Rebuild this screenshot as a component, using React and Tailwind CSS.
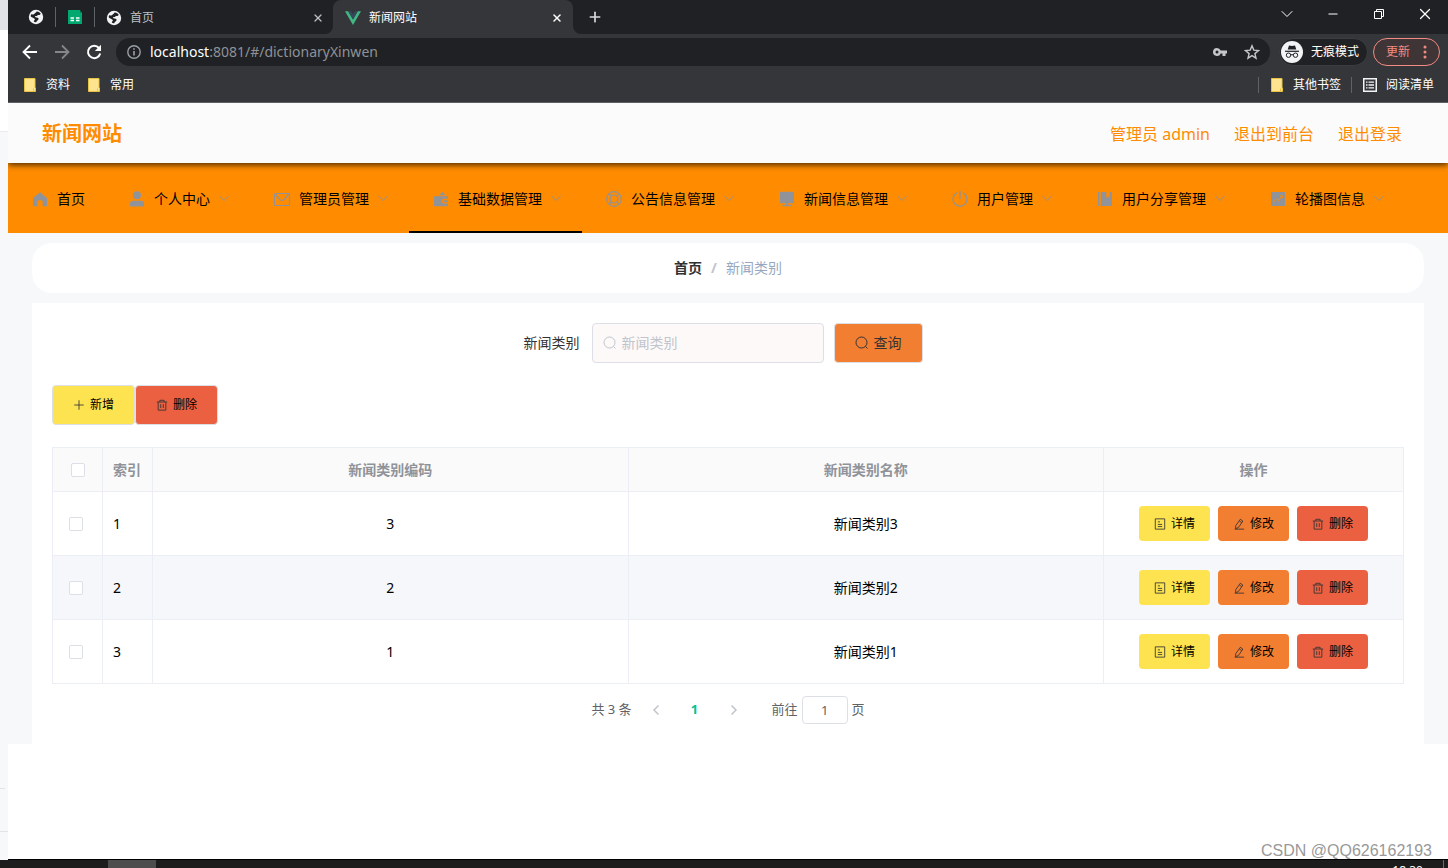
import { ChevronDown, Minus, Plus, X } from 'lucide-react';

const menus = [
  { label: '首页', icon: 'home', arrow: false },
  { label: '个人中心', icon: 'user', arrow: true },
  { label: '管理员管理', icon: 'mail', arrow: true },
  { label: '基础数据管理', icon: 'wallet', arrow: true, active: true },
  { label: '公告信息管理', icon: 'help', arrow: true },
  { label: '新闻信息管理', icon: 'monitor', arrow: true },
  { label: '用户管理', icon: 'power', arrow: true },
  { label: '用户分享管理', icon: 'notebook', arrow: true },
  { label: '轮播图信息', icon: 'chart', arrow: true },
];

const rows = [
  { id: 1, code: 3, name: '新闻类别3' },
  { id: 2, code: 2, name: '新闻类别2' },
  { id: 3, code: 1, name: '新闻类别1' },
];

// Drawn on an 18px grid, filled shapes use currentColor and cut-outs use evenodd
const menuIcons = {
  home: <path fill="currentColor" d="M9 2.3 16 8v8.2h-4.3v-4.4a1.5 1.5 0 0 0-1.5-1.5H7.8a1.5 1.5 0 0 0-1.5 1.5v4.4H2V8z" />,
  user: (
    <g fill="currentColor">
      <circle cx="9" cy="5.2" r="4" />
      <path d="M2 16.6v-2.8a3 3 0 0 1 3-3h8a3 3 0 0 1 3 3v2.8z" />
    </g>
  ),
  mail: (
    <g fill="none" stroke="currentColor" strokeWidth="1.2">
      <rect x="1.5" y="3.5" width="15" height="12" rx="1" />
      <path d="M2.5 4.5 7 9.6q2 1.6 4 0l4.5-5.1" />
    </g>
  ),
  wallet: (
    <g fill="currentColor">
      <path d="m6.5 5.2 4.500-3.400 2.200 3.400z" />
      <path d="M2 6.200h14v2.600h-3.800a2.400 2.400 0 0 0 0 4.800H16V16.200H2z" />
      <path d="M12.200 10.200h3.800v2h-3.800a1 1 0 0 1 0-2z" />
    </g>
  ),
  help: (
    <g fill="none" stroke="currentColor" strokeWidth="1.2">
      <circle cx="9" cy="9" r="7.3" />
      <circle cx="9" cy="9" r="4" />
      <path d="m4 3.700 2.500 2.600M14 3.700l-2.500 2.600M4 14.300l2.500-2.600M14 14.300l-2.500-2.600" />
    </g>
  ),
  monitor: <path fill="currentColor" d="M2 1.800h14v11.400H2zM8 13.200h2v1.600h3.500v1.400h-9v-1.400H8z" />,
  power: (
    <g fill="none" stroke="currentColor" strokeWidth="1.3" strokeLinecap="round">
      <path d="M5.800 3a7 7 0 1 0 6.400 0M9 1.500v7" />
    </g>
  ),
  notebook: (
    <path fill="currentColor" fillRule="evenodd" d="M2 2h1.500v14H2zM4.800 2H16v14H4.800zM10.300 2v6l1.700-1.600L13.700 8V2z" />
  ),
  chart: (
    <g>
      <rect x="2" y="2" width="14" height="14" fill="currentColor" />
      <path d="m4.500 12 3-3.200 2.200 1.700 3.500-4.700M10.800 5.800h2.500v2.400" fill="none" stroke="#ff8c00" />
    </g>
  ),
};

const smallIcons = {
  search: (
    <>
      <circle cx="6.5" cy="6.5" r="5.5" />
      <path d="m10.500 10.500 2 2" />
    </>
  ),
  plus: <path d="M7 1.500v11M1.500 7h11" />,
  trash: <path d="M1 3.500h12M4.500 3.500v-2h5v2M2.500 3.500v9.500h9V3.500M5.500 6v4.500M8.500 6v4.500" />,
  detail: <path d="M1.500 1h11v12h-11zM4.500 4.500h2.500M4.500 7.500h5M4.500 10h5" />,
  edit: <path d="M8.500 1.500 11.500 3.500 6.500 11 3 12.500 3.200 9zM7.500 3.500l3 2M2 13h11" />,
};

function SmallIcon({ name, className }) {
  return (
    <svg viewBox="0 0 14 14" fill="none" stroke="currentColor" aria-hidden="true" className={className}>
      {smallIcons[name]}
    </svg>
  );
}

function Globe() {
  return (
    <svg viewBox="0 0 16 16" className="size-4 shrink-0" aria-hidden="true">
      <circle cx="8" cy="8" r="7.2" fill="#f1f3f4" />
      <path
        d="M8.500 2.600c1.600-.3 3.600.8 4.300 2.400-.8.500-1.300 1.300-2.600 1-1 0-.8 1.200-2 1.100-1.300-.2-1.700.9-.6 1.200 1.200.4 2.800.2 3 1.500 0 1.500-2 1.700-2.300 3.400-1.300.2-2-.2-2.500-.8.3-1.200 1.300-1 1-2.300C6.200 8.900 4 8.800 2.600 7.200c.1-1 .4-1.700 1-2.300 1.300.9 2.200.6 2.900-.2.700-.8 1.800-1 2-2.100z"
        fill="#202124"
      />
    </svg>
  );
}

function Folder() {
  return (
    <svg viewBox="0 0 12 14" className="h-3.5 w-3 shrink-0" aria-hidden="true">
      <path d="M.5.5h10.500v9.500h.5v3.500H.5z" fill="#ffe48f" stroke="#e8c341" />
      <path d="M9.500 10.500v3" stroke="#e8c341" />
    </svg>
  );
}

function TabStrip() {
  return (
    <div className="flex h-[34px] items-center bg-[#202124] pl-5">
      <Globe />
      <span className="mx-[11px] h-5 w-px bg-[#5f6368]"></span>
      <svg viewBox="0 0 16 16" className="size-4 shrink-0" aria-hidden="true">
        <path d="M1 1h12v2h2v12H1z" fill="#00a870" />
        <path d="M13 1v3h2z" fill="#007a50" />
        <path d="M3.500 9h3.500M9 9h3.500M3.500 11.500h3.500M9 11.500h3.500" stroke="#fff" strokeWidth="1.3" />
      </svg>
      <span className="ml-[11px] h-5 w-px bg-[#5f6368]"></span>
      <div className="flex w-[238px] items-center gap-2 pt-px pl-[11px] pr-[7px] text-xs text-[#bdc1c6]">
        <Globe />
        <span className="flex-1">首页</span>
        <button aria-label="关闭" className="grid size-4 place-items-center">
          <X className="size-3" strokeWidth={2.5} />
        </button>
      </div>
      <div className="relative flex h-full w-60 items-center gap-2 rounded-t-lg bg-[#35363a] pt-px pl-3 pr-2 text-xs text-white">
        {/* curved feet of the active tab */}
        <svg viewBox="0 0 8 8" className="absolute bottom-0 -left-2 size-2" aria-hidden="true">
          <path d="M8 0v8H0a8 8 0 0 0 8-8z" fill="#35363a" />
        </svg>
        <svg viewBox="0 0 8 8" className="absolute bottom-0 -right-2 size-2" aria-hidden="true">
          <path d="M0 0v8h8a8 8 0 0 1-8-8z" fill="#35363a" />
        </svg>
        <svg viewBox="0 0 16 16" className="size-4 shrink-0" aria-hidden="true">
          <path d="M0 1.200h3.200L8 9.400l4.800-8.200H16L8 15z" fill="#41b883" />
          <path d="M3.200 1.200h3L8 4.300l1.800-3.100h3L8 9.400z" fill="#35495e" />
        </svg>
        <span className="flex-1">新闻网站</span>
        <button aria-label="关闭" className="grid size-4 place-items-center">
          <X className="size-3" strokeWidth={3} />
        </button>
      </div>
      <button aria-label="新标签页" className="ml-2 grid size-7 place-items-center text-[#dadce0]">
        <Plus className="size-4" strokeWidth={2.5} />
      </button>
      <div className="ml-auto flex h-7 self-start text-white">
        <button aria-label="搜索标签页" className="grid w-[46px] place-items-center">
          <ChevronDown className="size-5" strokeWidth={1.2} />
        </button>
        <button aria-label="最小化" className="grid w-[46px] place-items-center">
          <Minus className="size-3.5" strokeWidth={2} />
        </button>
        <button aria-label="还原" className="grid w-[46px] place-items-center">
          <svg viewBox="0 0 10 10" className="size-2.5" fill="none" stroke="currentColor">
            <path d="M.5 2.500h7v7h-7zM2.500 2.500v-2h7v7h-2" />
          </svg>
        </button>
        <button aria-label="关闭窗口" className="grid w-[46px] place-items-center">
          <X className="size-[18px]" strokeWidth={1.6} />
        </button>
      </div>
    </div>
  );
}

function Toolbar() {
  return (
    <div className="flex h-[34px] items-center bg-[#35363a] pl-1.5 pr-2 pt-1 pb-0.5">
      <button aria-label="后退" className="grid w-8 place-items-center text-white">
        <svg viewBox="0 0 16 16" className="size-4" fill="none" stroke="currentColor" strokeWidth="1.8">
          <path d="M15 8H2.500M8 1.500 1.500 8 8 14.500" />
        </svg>
      </button>
      <button aria-label="前进" className="grid w-8 place-items-center text-[#85878a]">
        <svg viewBox="0 0 16 16" className="size-4" fill="none" stroke="currentColor" strokeWidth="1.8">
          <path d="M1 8h12.500M8 1.500 14.500 8 8 14.500" />
        </svg>
      </button>
      <button aria-label="重新加载" className="grid w-8 place-items-center text-white">
        <svg viewBox="0 0 16 16" className="size-4">
          <path d="M13 4a6.200 6.200 0 1 0 1.200 5.500" fill="none" stroke="currentColor" strokeWidth="2" />
          <path d="M15 .8v6.200H8.800z" fill="currentColor" />
        </svg>
      </button>
      <div className="ml-1.5 flex h-7 flex-1 items-center rounded-full bg-[#202124] pl-[11px] pr-0.5">
        <svg viewBox="0 0 14 14" className="size-3.5" aria-hidden="true">
          <circle cx="7" cy="7" r="6.2" fill="none" stroke="#9aa0a6" strokeWidth="1.4" />
          <path d="M7 6v4.500M7 3.200v1.600" stroke="#9aa0a6" strokeWidth="1.6" />
        </svg>
        <span className="ml-[9px] flex-1 text-sm text-[#8e9297]">
          <span className="text-white">localhost</span>:8081/#/dictionaryXinwen
        </span>
        <button aria-label="密码" className="grid w-8 place-items-center text-[#c4c7ca]">
          <svg viewBox="0 0 16 16" className="size-4">
            <path
              fill="currentColor"
              fillRule="evenodd"
              d="M5 4a4 4 0 1 0 3.700 5.500H10.500V12H13.500V9.500H15V6.500H8.700A4 4 0 0 0 5 4zm0 2.500a1.500 1.500 0 1 1 0 3 1.500 1.500 0 0 1 0-3z"
            />
          </svg>
        </button>
        <button aria-label="收藏" className="grid w-8 place-items-center text-[#c4c7ca]">
          <svg viewBox="0 0 16 16" className="size-4" fill="none" stroke="currentColor" strokeWidth="1.4">
            <path d="m8 1.800 1.800 4.300 4.700.4-3.600 3.100 1.100 4.600L8 11.700l-4 2.500 1.100-4.600L1.500 6.500l4.700-.4z" />
          </svg>
        </button>
      </div>
      <div className="ml-[9px] flex h-7 items-center gap-2 rounded-full border border-[#3c3d41] bg-[#202124] pl-px pr-2 text-xs text-white">
        <svg viewBox="0 0 22 22" className="size-[22px]" aria-hidden="true">
          <circle cx="11" cy="11" r="11" fill="#f1f3f4" />
          <path d="M8 4.500 11 5l3-.5 1.300 4H6.700z" fill="#202124" />
          <path d="M4 10.300h14" stroke="#202124" strokeWidth="1.2" />
          <g fill="none" stroke="#202124">
            <circle cx="7.500" cy="14.200" r="2.2" />
            <circle cx="14.500" cy="14.200" r="2.2" />
            <path d="M9.700 14q1.300-.8 2.600 0" />
          </g>
        </svg>
        无痕模式
      </div>
      <button className="ml-[5px] flex h-7 items-center gap-[13px] rounded-full border border-[#f28b82] bg-[#3f3537] px-3 text-xs text-[#f28b82]">
        更新
        <svg viewBox="0 0 4 14" className="h-3.5 w-1" fill="currentColor" aria-hidden="true">
          <circle cx="2" cy="2" r="1.5" />
          <circle cx="2" cy="7" r="1.5" />
          <circle cx="2" cy="12" r="1.5" />
        </svg>
      </button>
    </div>
  );
}

function Bookmarks() {
  return (
    <div className="flex h-[35px] items-center border-b border-[#5f6064] bg-[#35363a] pl-4 pr-3.5 text-xs text-white">
      <a href="#ziliao" className="flex items-center gap-2.5">
        <Folder />
        资料
      </a>
      <a href="#changyong" className="ml-[18px] flex items-center gap-2.5">
        <Folder />
        常用
      </a>
      <span className="ml-auto h-4 w-px bg-[#5f6368]"></span>
      <a href="#other" className="ml-3 flex items-center gap-2.5">
        <Folder />
        其他书签
      </a>
      <span className="ml-2.5 h-4 w-px bg-[#5f6368]"></span>
      <a href="#reading" className="ml-[11px] flex items-center gap-[9px]">
        <svg viewBox="0 0 14 14" className="size-3.5" fill="none" stroke="#f1f3f4" aria-hidden="true">
          <rect x=".75" y=".75" width="12.5" height="12.5" strokeWidth="1.5" />
          <path d="M3 4.200h1.500M5.500 4.200H11M3 7h1.500M5.500 7H11M3 9.800h1.500M5.500 9.800H11" strokeWidth="1.3" />
        </svg>
        阅读清单
      </a>
    </div>
  );
}

function Header() {
  return (
    <header className="relative z-10 flex h-[60px] items-center justify-between bg-[#fbfbfb] pt-0.5 pl-[34px] pr-[46px] text-[#ff8c00] shadow-[0_2px_6px_rgba(0,0,0,0.7)]">
      <h1 className="text-xl font-bold">新闻网站</h1>
      <div className="flex gap-6 text-base">
        <span>管理员 admin</span>
        <a href="#front">退出到前台</a>
        <a href="#logout">退出登录</a>
      </div>
    </header>
  );
}

function NavMenu() {
  return (
    <nav className="flex h-[70px] bg-[#ff8c00] text-sm text-black">
      {menus.map((m) => (
        <a
          key={m.label}
          href={`#${m.icon}`}
          className={`flex shrink-0 items-center border-b-2 px-5 pt-1 ${m.active ? 'border-black' : 'border-transparent'}`}
        >
          <span className="mr-[5px] grid w-6 place-items-center text-[#909399]">
            <svg viewBox="0 0 18 18" className="size-[18px]" aria-hidden="true">
              {menuIcons[m.icon]}
            </svg>
          </span>
          {m.label}
          {m.arrow && (
            <svg viewBox="0 0 12 12" className="ml-2 size-3 text-[#909399]" fill="none" stroke="currentColor" aria-hidden="true">
              <path d="M1.500 3 6 7.500 10.500 3" />
            </svg>
          )}
        </a>
      ))}
    </nav>
  );
}

const checkbox = 'block size-3.5 appearance-none rounded-xs border border-[#dcdfe6] bg-white';
const cell = 'border-r border-b border-[#ebeef5]';
const action = 'flex h-[35px] items-center gap-[5px] rounded px-[15px]';

function DataTable() {
  return (
    <table className="mt-[22px] w-full table-fixed border-separate border-spacing-0 border-t border-l border-[#ebeef5] text-sm text-black">
      <thead>
        <tr className="h-11 bg-[#fafafa] text-[#909399]">
          <th className={`${cell} w-[50px]`}>
            <input type="checkbox" aria-label="全选" className={`${checkbox} mx-auto`} />
          </th>
          <th className={`${cell} w-[50px] px-2.5 text-left`}>索引</th>
          <th className={cell}>新闻类别编码</th>
          <th className={cell}>新闻类别名称</th>
          <th className={`${cell} w-[300px]`}>操作</th>
        </tr>
      </thead>
      <tbody>
        {rows.map((r) => (
          <tr key={r.id} className="h-16 even:bg-[#f5f7fa]">
            <td className={`${cell} pl-4`}>
              <input type="checkbox" aria-label={r.name} className={checkbox} />
            </td>
            <td className={`${cell} px-2.5`}>{r.id}</td>
            <td className={`${cell} text-center`}>{r.code}</td>
            <td className={`${cell} text-center`}>{r.name}</td>
            <td className={cell}>
              <div className="flex justify-center gap-2 text-xs">
                <button className={`${action} bg-[#fde34f]`}>
                  <SmallIcon name="detail" className="size-3 text-[#333]" />
                  详情
                </button>
                <button className={`${action} bg-[#f27e31]`}>
                  <SmallIcon name="edit" className="size-3 text-[#333]" />
                  修改
                </button>
                <button className={`${action} bg-[#eb6041]`}>
                  <SmallIcon name="trash" className="size-3 text-[#333]" />
                  删除
                </button>
              </div>
            </td>
          </tr>
        ))}
      </tbody>
    </table>
  );
}

function Pagination() {
  return (
    <div className="mt-3 flex h-7 items-center justify-center text-[13px] text-[#606266]">
      <span>共 3 条</span>
      <button aria-label="上一页" className="mx-2.5 grid w-7 place-items-center text-[#c0c4cc]">
        <svg viewBox="0 0 12 12" className="size-3" fill="none" stroke="currentColor" strokeWidth="1.5">
          <path d="M8.500 1.500 4 6l4.500 4.500" />
        </svg>
      </button>
      <button className="w-[30px] font-bold text-[#00c292]">1</button>
      <button aria-label="下一页" className="mx-2.5 grid w-7 place-items-center text-[#c0c4cc]">
        <svg viewBox="0 0 12 12" className="size-3" fill="none" stroke="currentColor" strokeWidth="1.5">
          <path d="M3.500 1.500 8 6l-4.500 4.500" />
        </svg>
      </button>
      <label htmlFor="jump" className="ml-3.5">前往</label>
      <input id="jump" defaultValue="1" className="mx-1 h-7 w-[46px] rounded border border-[#dcdfe6] bg-white text-center" />
      <span>页</span>
    </div>
  );
}

function App() {
  return (
    <div className="flex min-h-screen flex-col bg-white font-['Noto_Sans','Noto_Sans_CJK_SC',sans-serif]">
      <div className="flex flex-1">
        {/* sliver of the window behind */}
        <div className="flex w-2 shrink-0 flex-col bg-[#f7f8fa]">
          <div className="h-[30px] bg-[#e1e3e8]"></div>
          <div className="h-[102px] border-b border-[#ebebed] bg-white"></div>
          <div className="mt-auto mr-[3px] h-px bg-[#e1e3e8]"></div>
          <div className="mt-[42px] mb-7 h-px bg-[#e1e3e8]"></div>
        </div>

        <div className="flex min-w-0 flex-1 flex-col overflow-hidden border-b border-black">
          <div className="relative z-20">
            <TabStrip />
            <Toolbar />
            <Bookmarks />
          </div>
          <Header />
          <NavMenu />
          <main className="bg-[#f7f8fa] px-6 pt-2.5">
            <div className="flex h-[50px] items-center justify-center rounded-[20px] bg-white text-sm">
              <a href="#home" className="font-bold text-[#303133]">首页</a>
              <span className="mx-[9px] font-bold text-[#c0c4cc]">/</span>
              <span className="text-[#97a8be]">新闻类别</span>
            </div>
            <section className="mt-2.5 bg-white p-5">
              <form className="flex items-center justify-center pr-2.5 text-sm text-[#333]">
                <label htmlFor="category" className="pr-3">新闻类别</label>
                <div className="flex h-10 w-[232px] items-center gap-[5px] rounded border border-[#dcdfe6] bg-[#fdf9f8] px-2.5">
                  <SmallIcon name="search" className="size-3.5 shrink-0 text-[#c0c4cc]" />
                  <input id="category" placeholder="新闻类别" className="min-w-0 flex-1 bg-transparent outline-none placeholder:text-[#c0c4cc]" />
                </div>
                <button type="button" className="ml-2.5 flex h-10 items-center gap-[5px] rounded border border-[#dcdfe6] bg-[#f27e31] px-5">
                  <SmallIcon name="search" className="size-3.5" />
                  查询
                </button>
              </form>
              <div className="mt-[22px] flex text-xs text-black">
                <button className="flex h-10 items-center gap-[5px] rounded border border-[#dcdfe6] bg-[#fde34f] px-5">
                  <SmallIcon name="plus" className="size-3 text-[#333]" />
                  新增
                </button>
                <button className="flex h-10 items-center gap-[5px] rounded border border-[#dcdfe6] bg-[#eb6041] px-5">
                  <SmallIcon name="trash" className="size-3 text-[#333]" />
                  删除
                </button>
              </div>
              <DataTable />
              <Pagination />
            </section>
          </main>
          <div className="flex flex-1 items-end justify-end pr-4 font-['Liberation_Sans',sans-serif] text-base leading-4 text-[#999]">
            CSDN @QQ626162193
          </div>
        </div>
      </div>

      {/* top edge of the taskbar */}
      <footer className="flex h-2 items-start overflow-hidden bg-[#1c1c1c] text-xs text-white">
        <span className="ml-[108px] h-2 w-12 bg-[#4d4d4d]"></span>
        <span className="mt-[3px] mr-5 ml-auto leading-4">18:30</span>
        <span className="mr-1 h-2 w-px bg-[#6b6b6b]"></span>
      </footer>
    </div>
  );
}

export default App;
